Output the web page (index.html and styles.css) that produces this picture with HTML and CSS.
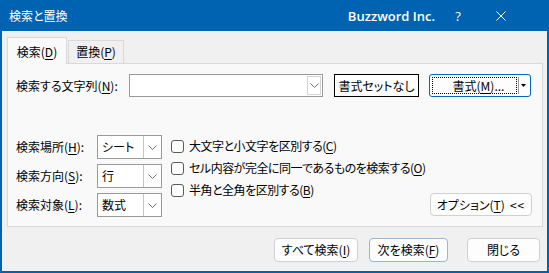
FILE: index.html
```html
<!DOCTYPE html>
<html lang="ja">
<head>
    <meta charset="UTF-8">
    <title>検索と置換</title>
    <link rel="stylesheet" href="styles.css">
</head>
<body>
    <div class="window">
        <div class="titlebar">
            <span class="title">検索と置換</span>
            <span class="brand">Buzzword Inc.</span>
            <span class="help">?</span>
            <span class="close">
                <svg width="10" height="10" viewBox="0 0 10 10"><path d="M0.5 0.5 L9.5 9.5 M9.5 0.5 L0.5 9.5" stroke="#fff" stroke-width="1" fill="none"/></svg>
            </span>
        </div>
        <div class="client">
            <div class="tabs">
                <div class="tab tab-active">検索(<u>D</u>)</div>
                <div class="tab">置換(<u>P</u>)</div>
            </div>
            <div class="panel">
                <div class="row-find">
                    <span class="find-label">検索する文字列(<u>N</u>):</span>
                    <div class="combo">
                        <div class="combo-arrow">
                            <svg width="9" height="5" viewBox="0 0 9 5"><path d="M0.5 0.5 L4.5 4.5 L8.5 0.5" stroke="#707070" fill="none"/></svg>
                        </div>
                    </div>
                    <button class="btn btn-default">書式セットなし</button>
                    <div class="btn btn-split">
                        <span class="split-main">書式(<u>M</u>)...</span>
                        <span class="split-sep"></span>
                        <span class="split-arrow">
                            <svg width="5" height="3" viewBox="0 0 5 3"><path d="M0 0 L5 0 L2.5 3 Z" fill="#000"/></svg>
                        </span>
                    </div>
                </div>
                <div class="options">
                    <div class="option-grid">
                        <span>検索場所(<u>H</u>):</span>
                        <div class="select"><span class="select-text">シート</span><span class="select-arrow"><svg width="9" height="5" viewBox="0 0 9 5"><path d="M0.5 0.5 L4.5 4.5 L8.5 0.5" stroke="#707070" fill="none"/></svg></span></div>
                        <span>検索方向(<u>S</u>):</span>
                        <div class="select"><span class="select-text">行</span><span class="select-arrow"><svg width="9" height="5" viewBox="0 0 9 5"><path d="M0.5 0.5 L4.5 4.5 L8.5 0.5" stroke="#707070" fill="none"/></svg></span></div>
                        <span>検索対象(<u>L</u>):</span>
                        <div class="select"><span class="select-text">数式</span><span class="select-arrow"><svg width="9" height="5" viewBox="0 0 9 5"><path d="M0.5 0.5 L4.5 4.5 L8.5 0.5" stroke="#707070" fill="none"/></svg></span></div>
                    </div>
                    <div class="checks">
                        <div class="check"><span class="box"></span>大文字と小文字を区別する(<u>C</u>)</div>
                        <div class="check"><span class="box"></span>セル内容が完全に同一であるものを検索する(<u>O</u>)</div>
                        <div class="check"><span class="box"></span>半角と全角を区別する(<u>B</u>)</div>
                    </div>
                    <button class="btn btn-options">オプション(<u>T</u>)<span class="chev">&lt;&lt;</span></button>
                </div>
            </div>
            <div class="actions">
                <button class="btn btn-all">すべて検索(<u>I</u>)</button>
                <button class="btn btn-next">次を検索(<u>F</u>)</button>
                <button class="btn btn-close">閉じる</button>
            </div>
        </div>
    </div>
</body>
</html>
```

FILE: styles.css
```css
body {
    margin: 0;
    font-family: "Noto Sans CJK JP", sans-serif;
    font-size: 12px;
    font-feature-settings: "palt";
    line-height: 16px;
    color: #000;
    background-color: #fff;
}
u {
    text-underline-offset: 2px;
}
.window {
    width: 549px;
    height: 273px;
    box-sizing: border-box;
    display: flex;
    flex-direction: column;
    background-color: #f0f0f0;
    border: 2px solid #0063b1;
    border-top: 0;
}
.titlebar {
    height: 31px;
    flex-shrink: 0;
    background-color: #0063b1;
    color: #fff;
    display: flex;
    align-items: center;
    padding: 0 34px 0 7px;
}
.brand {
    margin-left: auto;
    font-family: "Open Sans", sans-serif;
    font-weight: 600;
    font-size: 13px;
}
.help {
    width: 24px;
    margin-left: 11px;
    text-align: center;
    font-family: "Open Sans", sans-serif;
    font-size: 13px;
}
.close {
    width: 24px;
    margin-left: 19px;
    display: flex;
    justify-content: center;
}
.client {
    flex-grow: 1;
    padding: 6px 4px 0 5px;
    display: flex;
    flex-direction: column;
}
.tabs {
    display: flex;
    align-items: flex-end;
    height: 26px;
}
.tab {
    box-sizing: border-box;
    width: 56px;
    height: 23px;
    margin-left: 1px;
    border: 1px solid #d9d9d9;
    border-bottom: 0;
    background-color: #f0f0f0;
    display: flex;
    align-items: center;
    justify-content: center;
}
.tab-active {
    width: 60px;
    height: 27px;
    margin: 0 0 -1px 0;
    background-color: #f9f9f9;
    position: relative;
    z-index: 1;
    padding-top: 1px;
}
.panel {
    box-sizing: border-box;
    width: 536px;
    border: 1px solid #d9d9d9;
    background-color: #f9f9f9;
    padding: 10px 0 9px 8px;
}
.row-find {
    display: flex;
    align-items: center;
    height: 23px;
}
.find-label {
    width: 113px;
}
.combo {
    box-sizing: border-box;
    width: 194px;
    height: 23px;
    border: 1px solid #9a9a9a;
    background-color: #fff;
    display: flex;
    justify-content: flex-end;
    padding: 1px;
}
.combo-arrow {
    box-sizing: border-box;
    width: 14px;
    border: 1px solid #d4d4d4;
    display: flex;
    align-items: center;
    justify-content: center;
}
.btn {
    box-sizing: border-box;
    height: 23px;
    font: inherit;
    color: #000;
    background-color: #fdfdfd;
    border: 1px solid #d0d0d0;
    border-radius: 4px;
    padding: 0;
    display: flex;
    align-items: center;
    justify-content: center;
    white-space: nowrap;
}
.btn-default {
    width: 85px;
    margin-left: 11px;
    border-color: #000;
    border-radius: 0;
}
.btn-split {
    width: 102px;
    margin-left: 10px;
    border-color: #0067c0;
    border-radius: 3px;
    padding: 2px 3px 2px 2px;
}
.split-main {
    box-sizing: border-box;
    flex-grow: 1;
    height: 100%;
    border: 1px dotted #000;
    display: flex;
    align-items: center;
    justify-content: center;
    padding-left: 8px;
}
.split-sep {
    width: 1px;
    height: 17px;
    margin-left: 1px;
    background-color: #a0a0a0;
}
.split-arrow {
    width: 8px;
    display: flex;
    justify-content: center;
}
.options {
    display: flex;
    margin-top: 38px;
}
.option-grid {
    display: grid;
    grid-template-columns: 81px 65px;
    grid-auto-rows: 24px;
    row-gap: 5px;
    align-items: center;
    flex-shrink: 0;
}
.select {
    box-sizing: border-box;
    height: 24px;
    border: 1px solid #9a9a9a;
    background-color: #fff;
    display: flex;
}
.select-text {
    flex-grow: 1;
    padding-left: 4px;
    display: flex;
    align-items: center;
}
.select-arrow {
    width: 17px;
    border-left: 1px solid #c4c4c4;
    display: flex;
    align-items: center;
    justify-content: center;
}
.checks {
    margin-left: 9px;
    display: flex;
    flex-direction: column;
    flex-shrink: 0;
    white-space: nowrap;
    letter-spacing: -0.5px;
}
.check {
    height: 22px;
    display: flex;
    align-items: center;
}
.box {
    box-sizing: border-box;
    width: 13px;
    height: 13px;
    border: 1px solid #5a5a5a;
    border-radius: 3px;
    background-color: #fff;
    margin-right: 5px;
    flex-shrink: 0;
}
.btn-options {
    width: 102px;
    flex-shrink: 0;
    align-self: flex-end;
    margin: 0 10px 1px auto;
}
.chev {
    margin-left: 5px;
    letter-spacing: 1px;
}
.actions {
    display: flex;
    justify-content: flex-end;
    margin-top: 11px;
    padding-right: 3px;
}
.actions .btn {
    height: 24px;
}
.btn-all {
    width: 84px;
}
.btn-next {
    width: 79px;
    margin-left: 11px;
    border-color: #9ab5d3;
}
.btn-close {
    width: 73px;
    margin-left: 19px;
}
```
